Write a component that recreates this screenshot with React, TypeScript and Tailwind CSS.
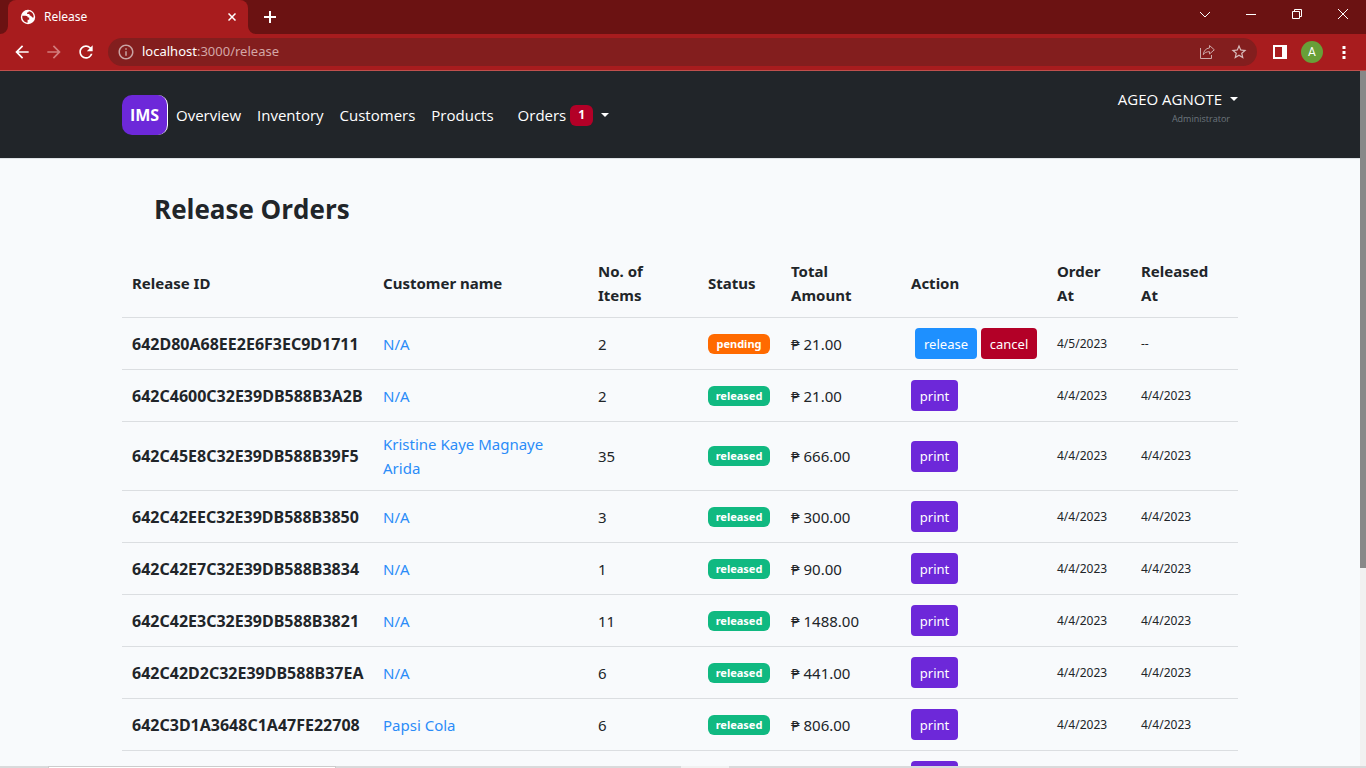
import type { ReactNode } from "react";
import { MdArrowBack, MdArrowForward, MdInfoOutline, MdRefresh, MdStarBorder } from "react-icons/md";

type Order = {
  id: string;
  customer: string;
  items: number;
  status: "pending" | "released";
  total: string;
  orderedAt: string;
  releasedAt: string;
};

const released = (id: string, customer: string, items: number, total: string): Order => ({
  id,
  customer,
  items,
  status: "released",
  total,
  orderedAt: "4/4/2023",
  releasedAt: "4/4/2023",
});

const orders: Order[] = [
  {
    id: "642D80A68EE2E6F3EC9D1711",
    customer: "N/A",
    items: 2,
    status: "pending",
    total: "21.00",
    orderedAt: "4/5/2023",
    releasedAt: "--",
  },
  released("642C4600C32E39DB588B3A2B", "N/A", 2, "21.00"),
  released("642C45E8C32E39DB588B39F5", "Kristine Kaye Magnaye Arida", 35, "666.00"),
  released("642C42EEC32E39DB588B3850", "N/A", 3, "300.00"),
  released("642C42E7C32E39DB588B3834", "N/A", 1, "90.00"),
  released("642C42E3C32E39DB588B3821", "N/A", 11, "1488.00"),
  released("642C42D2C32E39DB588B37EA", "N/A", 6, "441.00"),
  released("642C3D1A3648C1A47FE22708", "Papsi Cola", 6, "806.00"),
];

function Caret() {
  return (
    <svg width="8" height="4" viewBox="0 0 8 4" fill="currentColor" aria-hidden="true">
      <path d="M0 0h8L4 4z" />
    </svg>
  );
}

function TabStrip() {
  return (
    <div className="flex h-[34px] shrink-0 items-center bg-[#6b1212] pl-2 text-white">
      <div className="relative flex h-full w-60 items-center rounded-t-lg bg-[#a81c1e] pl-3 pr-2">
        <svg className="absolute -left-2 bottom-0" width="8" height="8" viewBox="0 0 8 8" aria-hidden="true">
          <path d="M8 0v8H0a8 8 0 0 0 8-8z" fill="#a81c1e" />
        </svg>
        <svg className="absolute -right-2 bottom-0" width="8" height="8" viewBox="0 0 8 8" aria-hidden="true">
          <path d="M0 0v8h8a8 8 0 0 1-8-8z" fill="#a81c1e" />
        </svg>
        <svg width="16" height="16" viewBox="0 0 16 16" aria-hidden="true">
          <circle cx="8" cy="8" r="7.2" fill="#fff" />
          <path
            d="M2.300 6.800h3.200c1.600 0 2.300.7 2.300 1.700h1.400v2.300H7.600v2.900C4.300 13.500 1.900 10.700 2.300 6.800zM8.800 2.300c-.1.900-.5 1.300-1.700 1.300v1.500h2.200c.2 1.300.8 2 2 2 .3 1 .9 1.600 2.300 1.500.5-3.300-1.600-5.900-4.800-6.300z"
            fill="#a81c1e"
          />
        </svg>
        <span className="ml-2 flex-1 text-xs">Release</span>
        <button type="button" aria-label="Close tab" className="flex size-4 items-center justify-center">
          <svg width="8" height="8" viewBox="0 0 8 8" stroke="#fff" strokeWidth="1.5" aria-hidden="true">
            <path d="M0.500 0.500l7 7M7.500 0.500l-7 7" />
          </svg>
        </button>
      </div>
      <button type="button" aria-label="New tab" className="ml-2 flex size-7 items-center justify-center">
        <svg width="12" height="12" viewBox="0 0 12 12" stroke="#fff" strokeWidth="2" aria-hidden="true">
          <path d="M6 0v12M0 6h12" />
        </svg>
      </button>
      <div className="ml-auto flex h-full items-center pb-[6px]">
        <button type="button" aria-label="Search tabs" className="flex h-7 w-[46px] items-center justify-center">
          <svg width="12" height="7" viewBox="0 0 12 7" fill="none" stroke="#fff" aria-hidden="true">
            <path d="M1 1l5 5 5-5" />
          </svg>
        </button>
        <button type="button" aria-label="Minimize" className="flex h-7 w-[46px] items-center justify-center">
          <svg width="10" height="1" viewBox="0 0 10 1" aria-hidden="true">
            <path d="M0 0h10v1H0z" fill="#fff" />
          </svg>
        </button>
        <button type="button" aria-label="Restore" className="flex h-7 w-[46px] items-center justify-center">
          <svg width="10" height="10" viewBox="0 0 10 10" fill="none" stroke="#fff" aria-hidden="true">
            <path d="M0.500 2.500h7v7h-7zM2.500 2.500v-2h7v7h-2" />
          </svg>
        </button>
        <button type="button" aria-label="Close window" className="flex h-7 w-[46px] items-center justify-center">
          <svg width="10" height="10" viewBox="0 0 10 10" stroke="#fff" aria-hidden="true">
            <path d="M0 0l10 10M10 0L0 10" />
          </svg>
        </button>
      </div>
    </div>
  );
}

function Toolbar() {
  return (
    <div className="flex h-[37px] shrink-0 items-center border-b border-[#c0504d] bg-[#a81c1e] px-3 text-white">
      <button type="button" aria-label="Back">
        <MdArrowBack size={20} />
      </button>
      <button type="button" aria-label="Forward" className="ml-3 text-[#d27c7c]">
        <MdArrowForward size={20} />
      </button>
      <button type="button" aria-label="Reload" className="ml-3">
        <MdRefresh size={20} />
      </button>
      <div className="ml-3 flex h-7 flex-1 items-center rounded-full bg-[#831e1e] px-[9px]">
        <MdInfoOutline size={18} className="text-[#c9a3a3]" />
        <div className="ml-[7px] flex-1 text-[13px]">
          localhost<span className="text-[#d3a6a6]">:3000/release</span>
        </div>
        <button type="button" aria-label="Share" className="text-[#cda9a9]">
          <svg width="16" height="16" viewBox="0 0 16 16" fill="none" stroke="currentColor" aria-hidden="true">
            <path d="M1.500 4v10.500h11V11" />
            <path
              d="M10.500 1.500l4.800 4.300-4.800 4.200V7.700c-3 0-4.900.9-6.200 3 .4-3.900 2.500-6.300 6.200-6.800z"
              strokeLinejoin="round"
            />
          </svg>
        </button>
        <button type="button" aria-label="Bookmark" className="ml-[15px] text-[#d8bcbc]">
          <MdStarBorder size={18} />
        </button>
      </div>
      <button type="button" aria-label="Side panel" className="ml-4">
        <svg width="14" height="14" viewBox="0 0 14 14" aria-hidden="true">
          <path d="M0 0h14v14H0zM2 2v10h7V2z" fill="#fff" fillRule="evenodd" />
        </svg>
      </button>
      <button
        type="button"
        className="ml-[14px] flex size-[22px] items-center justify-center rounded-full bg-[#689f38] font-[Roboto] text-xs"
      >
        A
      </button>
      <button type="button" aria-label="Menu" className="ml-[11px] flex w-5 justify-center">
        <svg width="4" height="14" viewBox="0 0 4 14" fill="#fff" aria-hidden="true">
          <path d="M.5 1h3v3h-3zM.5 6h3v3h-3zM.5 11h3v3h-3z" />
        </svg>
      </button>
    </div>
  );
}

function NavLink({ children }: { children: ReactNode }) {
  return (
    <a href="#" className="px-2">
      {children}
    </a>
  );
}

function NavBar() {
  return (
    <header className="border-b border-[#dee2e6] bg-[#212529] font-['Open_Sans','Noto_Sans',sans-serif] text-[15px] leading-6 text-white">
      <div className="mx-auto flex max-w-[1140px] items-start justify-between px-3 pb-[23px] pt-4">
        <nav className="flex items-center pt-2">
          <a
            href="#"
            className="flex h-10 w-[46px] items-center justify-center rounded-[10px] border-r border-white bg-[#6d28d9] text-base font-bold"
          >
            IMS
          </a>
          <NavLink>Overview</NavLink>
          <NavLink>Inventory</NavLink>
          <NavLink>Customers</NavLink>
          <NavLink>Products</NavLink>
          <button type="button" className="ml-2 flex items-center px-2">
            Orders
            <span className="ml-1 mr-2 flex h-[21px] w-[23px] items-center justify-center rounded-md bg-[#b30027] text-xs font-bold">
              1
            </span>
            <Caret />
          </button>
        </nav>
        <button type="button" className="flex flex-col items-end">
          <span className="flex items-center gap-2">
            AGEO AGNOTE
            <Caret />
          </span>
          <span className="pr-2 text-[9px] leading-4 text-[#6c757d]">Administrator</span>
        </button>
      </div>
    </header>
  );
}

function PrintButton() {
  return (
    <button
      type="button"
      className="block h-[31px] w-[47px] rounded-sm bg-[#6d28d9] text-[13px] text-white"
    >
      print
    </button>
  );
}

function OrderRow({ order }: { order: Order }) {
  const pending = order.status === "pending";
  return (
    <tr className="border-b border-[#dbdee1]">
      <th scope="row" className="whitespace-nowrap py-[10px] pl-[10px] text-left text-base leading-6 font-bold">
        {order.id}
      </th>
      <td className="py-[10px] pl-[10px] pr-8">
        <a href="#" className="text-[#2b8cf8]">
          {order.customer}
        </a>
      </td>
      <td className="p-[10px]">{order.items}</td>
      <td className="p-[10px]">
        <span
          className={
            pending
              ? "flex h-5 w-[62px] items-center justify-center rounded-md bg-[#ff6a00] text-[11px] font-bold text-white"
              : "flex h-5 w-[62px] items-center justify-center rounded-md bg-[#10b981] text-[11px] font-bold text-white"
          }
        >
          {order.status}
        </span>
      </td>
      <td className="p-[10px]">₱ {order.total}</td>
      <td className="p-[10px]">
        {pending ? (
          <div className="flex gap-1 pl-1">
            <button type="button" className="h-[31px] w-[62px] shrink-0 rounded-sm bg-[#1e90ff] text-[13px] text-white">
              release
            </button>
            <button type="button" className="h-[31px] w-14 shrink-0 rounded-sm bg-[#b30027] text-[13px] text-white">
              cancel
            </button>
          </div>
        ) : (
          <PrintButton />
        )}
      </td>
      <td className="p-[10px] text-xs">{order.orderedAt}</td>
      <td className="p-[10px] text-xs">{order.releasedAt}</td>
    </tr>
  );
}

function OrdersTable() {
  return (
    <table className="w-full table-fixed border-collapse text-[15px] leading-6">
      <colgroup>
        <col className="w-[251px]" />
        <col className="w-[215px]" />
        <col className="w-[110px]" />
        <col className="w-[83px]" />
        <col className="w-[120px]" />
        <col className="w-[146px]" />
        <col className="w-[84px]" />
        <col className="w-[107px]" />
      </colgroup>
      <thead>
        <tr className="border-b border-[#dbdee1] text-left">
          <th className="p-[10px] font-bold">Release ID</th>
          <th className="p-[10px] font-bold">Customer name</th>
          <th className="p-[10px] font-bold">
            No. of
            <br />
            Items
          </th>
          <th className="p-[10px] font-bold">Status</th>
          <th className="p-[10px] font-bold">
            Total
            <br />
            Amount
          </th>
          <th className="p-[10px] font-bold">Action</th>
          <th className="p-[10px] font-bold">
            Order
            <br />
            At
          </th>
          <th className="p-[10px] font-bold">
            Released
            <br />
            At
          </th>
        </tr>
      </thead>
      <tbody>
        {orders.map((order) => (
          <OrderRow key={order.id} order={order} />
        ))}
        <tr>
          <td colSpan={5} />
          <td className="p-[10px]">
            <PrintButton />
          </td>
          <td colSpan={2} />
        </tr>
      </tbody>
    </table>
  );
}

export default function App() {
  return (
    <div className="flex h-screen flex-col overflow-hidden bg-[#f8fafc] font-['Noto_Sans','Open_Sans',sans-serif] text-[#212529]">
      <TabStrip />
      <Toolbar />
      <div className="flex min-h-0 flex-1">
        <div className="min-w-0 flex-1 overflow-hidden">
          <NavBar />
          <main className="mx-auto max-w-[1140px] px-3 pt-[30px]">
            <h1 className="mb-5 px-8 font-['Open_Sans','Noto_Sans',sans-serif] text-[26px] font-bold leading-10">
              Release Orders
            </h1>
            <OrdersTable />
          </main>
        </div>
        <div className="w-[6px] shrink-0 bg-[#f1f1f1]">
          <div className="h-[71.5%] bg-[#888888]" />
        </div>
      </div>
      <div className="flex h-[2px] shrink-0 bg-[#d9dadb]">
        <div className="ml-12 w-[288px] border border-b-0 border-[#cccccc] bg-white" />
        <div className="ml-[345px] w-12 bg-[#f1f1f1]" />
      </div>
    </div>
  );
}
